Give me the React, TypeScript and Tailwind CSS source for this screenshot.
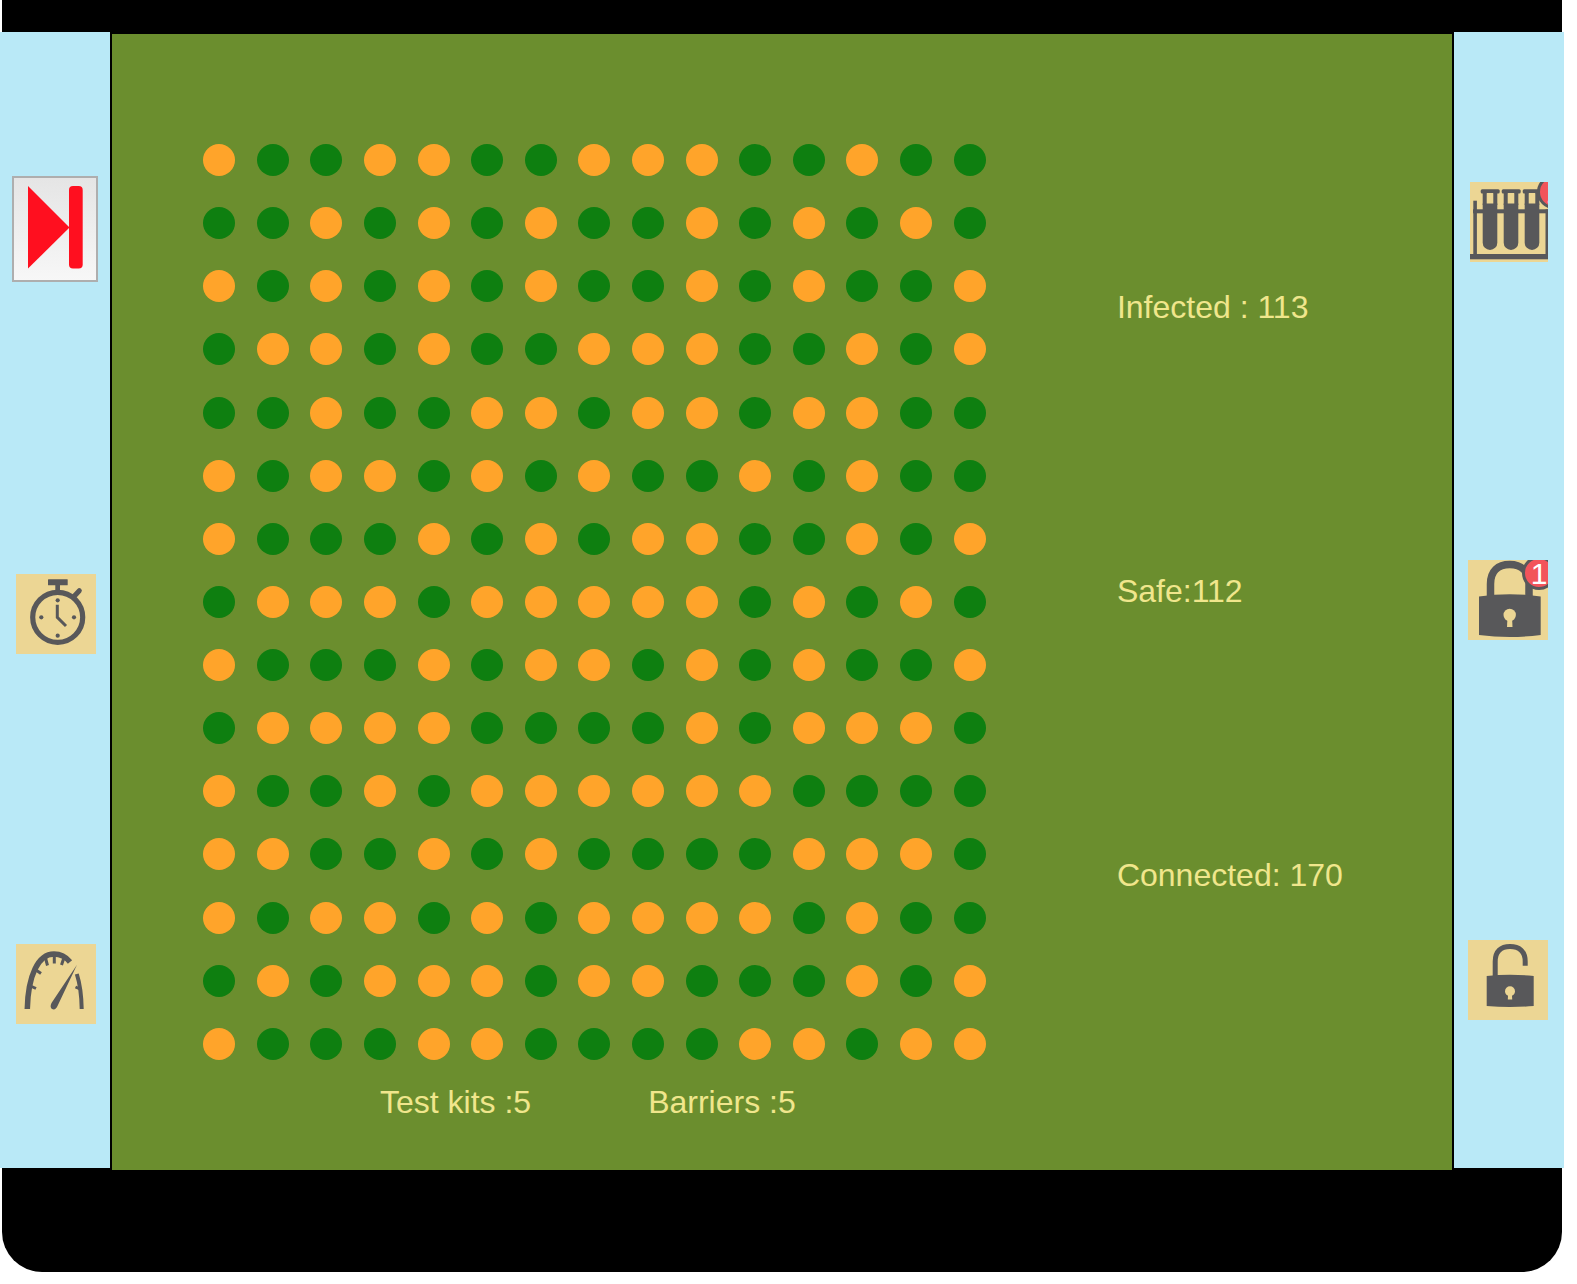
const rows = [
  "OGGOOGGOOOGGOGG",
  "GGOGOGOGGOGOGOG",
  "OGOGOGOGGOGOGGO",
  "GOOGOGGOOOGGOGO",
  "GGOGGOOGOOGOOGG",
  "OGOOGOGOGGOGOGG",
  "OGGGOGOGOOGGOGO",
  "GOOOGOOOOOGOGOG",
  "OGGGOGOOGOGOGGO",
  "GOOOOGGGGOGOOOG",
  "OGGOGOOOOOOGGGG",
  "OOGGOGOGGGGOOOG",
  "OGOOGOGOOOOGOGG",
  "GOGOOOGOOGGGOGO",
  "OGGGOOGGGGOOGOO",
];

const DARK = "#58585a";

function Stopwatch() {
  return (
    <svg width="80" height="80" viewBox="0 0 80 80" fill="none">
      <rect x="32" y="5.3" width="19.7" height="6" rx="0.5" fill={DARK} />
      <rect x="39.3" y="11" width="4.7" height="7" fill={DARK} />
      <path d="M57.5 23 L63.3 16.7" stroke={DARK} strokeWidth="5" strokeLinecap="round" />
      <circle cx="41.7" cy="43.3" r="25" stroke={DARK} strokeWidth="5.2" />
      <circle cx="41.7" cy="26.3" r="2.1" fill={DARK} />
      <circle cx="58" cy="43.3" r="2.1" fill={DARK} />
      <circle cx="41.7" cy="61.7" r="2.1" fill={DARK} />
      <circle cx="25.3" cy="43.3" r="2.1" fill={DARK} />
      <path d="M41.3 30.7 V43.3 L50 52" stroke={DARK} strokeWidth="3" />
    </svg>
  );
}

function Gauge() {
  return (
    <svg width="80" height="80" viewBox="0 0 80 80" fill="none">
      <path d="M11.3 65 C12 32 22 10 38 10 C45 10 50 13 54 18" stroke={DARK} strokeWidth="5.5" />
      <path d="M60.8 30 C64 40 65.5 52 65.7 65" stroke={DARK} strokeWidth="4" />
      <path d="M38.3 12 V19.5 M29.5 14 L31.5 21.5 M47.5 15 L45.5 21 M20 26 L25 29.5 M14.5 42 L20 44.5 M59.5 43 L64 45" stroke={DARK} strokeWidth="3" />
      <path d="M61 20.7 L41.5 62 Q39.5 66.5 36 65 Q33.5 63 35.5 59 Z" fill={DARK} />
    </svg>
  );
}

function Tubes() {
  const xs = [12.7, 33.7, 54.7];
  return (
    <svg width="78" height="80" viewBox="0 0 78 80" fill="none">
      <rect x="3.3" y="18.7" width="3.6" height="54" fill={DARK} />
      <rect x="3" y="27.3" width="75" height="4" fill={DARK} />
      <rect x="75.5" y="27.3" width="2.5" height="45" fill={DARK} />
      <rect x="0" y="72" width="78" height="5.3" fill={DARK} />
      {xs.map((x) => (
        <g key={x}>
          <rect x={x - 2} y="7.3" width="19" height="4.2" rx="1.5" fill={DARK} />
          <rect x={x + 3.8} y="11" width="7" height="10.5" fill="#ecd694" />
          <rect x={x} y="11" width="4" height="12" fill={DARK} />
          <rect x={x + 10.6} y="11" width="4" height="12" fill={DARK} />
          <path d={`M${x} 21.5 H${x + 14.6} V60.7 A7.3 7.3 0 0 1 ${x} 60.7 Z`} fill={DARK} />
        </g>
      ))}
    </svg>
  );
}

function Lock() {
  return (
    <svg width="80" height="80" viewBox="0 0 80 80" fill="none">
      <path d="M22.5 38 V24 C22.5 11 30 4.5 41.7 4.5 C53 4.5 61 11 61 24 V38" stroke={DARK} strokeWidth="7.5" />
      <path d="M11 36.5 Q41.7 32 72.7 36.5 V75 Q41.7 79 11 75 Z" fill={DARK} />
      <circle cx="41.7" cy="55" r="6.2" fill="#ecd694" />
      <path d="M39.5 57 H44 L44.5 67 H39 Z" fill="#ecd694" />
    </svg>
  );
}

function Unlock() {
  return (
    <svg width="80" height="80" viewBox="0 0 80 80" fill="none">
      <path d="M27.2 38 V21.5 C27.2 11 33 6.5 42 6.5 C51 6.5 57.2 11 57.2 21.5 V25.7" stroke={DARK} strokeWidth="5" />
      <path d="M18.7 36 Q42 33.5 65.7 36 V66 Q42 68 18.7 66 Z" fill={DARK} />
      <circle cx="42" cy="51.3" r="5" fill="#ecd694" />
      <path d="M40.2 53 H43.8 L44.2 59.5 H39.8 Z" fill="#ecd694" />
    </svg>
  );
}

export default function App() {
  return (
    <div className="w-[1577px] font-['Liberation_Sans',Arial,sans-serif] text-[32px] leading-[40px] text-[#f0e68c]">
      <div className="ml-[2px] h-8 w-[1560px] bg-black" />
      <div className="flex h-[1136px] w-[1564px] items-start bg-[#b9e9f7]">
        <div className="flex w-[110px] shrink-0 flex-col items-start pl-3 pt-[144px]">
          <div className="h-[106px] w-[86px] border-2 border-[#aeaeae] bg-gradient-to-b from-[#e5e5e5] to-[#f7f7f7]">
            <svg width="82" height="102" viewBox="0 0 82 102">
              <path d="M14 8 L55.5 49.5 L14 90.6 Z" fill="#ff0f1f" />
              <rect x="55" y="8" width="13.7" height="82.6" rx="4" fill="#ff0f1f" />
            </svg>
          </div>
          <div className="ml-1 mt-[292px] bg-[#ecd694]">
            <Stopwatch />
          </div>
          <div className="ml-1 mt-[290px] bg-[#ecd694]">
            <Gauge />
          </div>
        </div>

        <div className="relative z-10 h-[1138px] w-[1344px] shrink-0 border-x-2 border-t-2 border-black bg-[#6b8e2e]">
          <div className="flex pl-[80.5px] pt-[94.5px]">
            <div className="grid grid-cols-[repeat(15,53.6px)] grid-rows-[repeat(15,63.14px)]">
              {rows.flatMap((row, r) =>
                row.split("").map((c, i) => (
                  <div key={`${r}-${i}`} className="flex items-center justify-center">
                    <div className={c === "O" ? "h-8 w-8 rounded-full bg-[#ffa42a]" : "h-8 w-8 rounded-full bg-[#0e7f10]"} />
                  </div>
                ))
              )}
            </div>
            <div className="ml-[120.5px] flex flex-col gap-[244px] pt-[158.5px]">
              <div>Infected : 113</div>
              <div>Safe:112</div>
              <div>Connected: 170</div>
            </div>
          </div>
          <div className="mt-[6.5px] flex pl-[268px]">
            <div>Test kits :5</div>
            <div className="ml-[117px]">Barriers :5</div>
          </div>
        </div>

        <div className="flex w-[110px] shrink-0 flex-col items-start pt-[150px]">
          <div className="relative ml-4 h-20 w-[78px] overflow-hidden bg-[#ecd694]">
            <Tubes />
            <span className="absolute left-[67px] top-[-7px] flex h-[34px] w-[34px] justify-center rounded-full border-[3px] border-[#58585a] bg-[#f2545b] text-[30px] leading-[30px] text-white">
              1
            </span>
          </div>
          <div className="relative ml-3.5 mt-[298px] h-20 w-20 overflow-hidden bg-[#ecd694]">
            <Lock />
            <span className="absolute left-[54px] top-[-4px] flex h-[34px] w-[34px] justify-center rounded-full border-[3px] border-[#58585a] bg-[#f2545b] text-[30px] leading-[30px] text-white">
              1
            </span>
          </div>
          <div className="ml-3.5 mt-[300px] bg-[#ecd694]">
            <Unlock />
          </div>
        </div>
      </div>
      <div className="ml-[2px] h-[104px] w-[1560px] rounded-b-[40px] bg-black" />
    </div>
  );
}
